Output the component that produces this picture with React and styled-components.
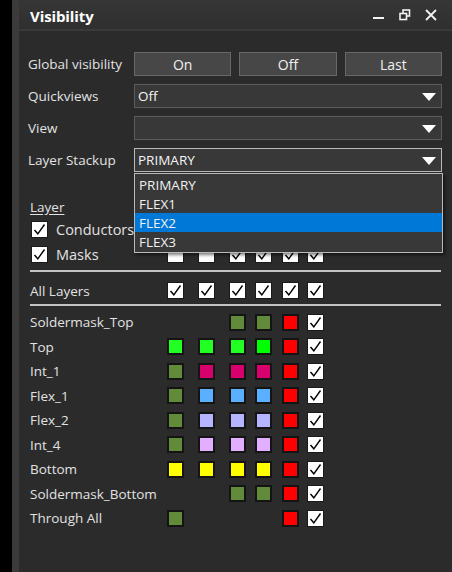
import React from 'react';
import styled, { createGlobalStyle } from 'styled-components';

const GlobalStyle = createGlobalStyle`
	html, body {
		margin: 0;
		padding: 0;
		background: #000;
	}
	#root {
		height: 572px;
	}
`;

const FONT = `"Open Sans", "Noto Sans", "DejaVu Sans", sans-serif`;

const OLIVE = '#618a3a';
const RED = '#ff0000';

const layers = [
	{ name: 'Soldermask_Top', cells: [null, null, OLIVE, OLIVE, RED, 'check'] },
	{ name: 'Top', cells: ['#22ff22', '#22ff22', '#22ff22', '#00ff00', RED, 'check'] },
	{ name: 'Int_1', cells: [OLIVE, '#d8006c', '#d8006c', '#d8006c', RED, 'check'] },
	{ name: 'Flex_1', cells: [OLIVE, '#5aafff', '#5aafff', '#5aafff', RED, 'check'] },
	{ name: 'Flex_2', cells: [OLIVE, '#b4b4ff', '#b4b4ff', '#b4b4ff', RED, 'check'] },
	{ name: 'Int_4', cells: [OLIVE, '#e2aeff', '#e2aeff', '#e2aeff', RED, 'check'] },
	{ name: 'Bottom', cells: ['#ffff00', '#ffff00', '#ffff00', '#ffff00', RED, 'check'] },
	{ name: 'Soldermask_Bottom', cells: [null, null, OLIVE, OLIVE, RED, 'check'] },
	{ name: 'Through All', cells: [OLIVE, null, null, null, RED, 'check'] },
];

const stackups = ['PRIMARY', 'FLEX1', 'FLEX2', 'FLEX3'];

const Screen = styled.div`
	display: flex;
	height: 572px;
	font-family: ${FONT};
	color: #e2e2e2;
`;

const Gutter = styled.div`
	width: 12px;
	background: #000;
`;

const Edge = styled.div`
	width: 7px;
	background: #3b3b3b;
`;

const Panel = styled.div`
	flex: 1;
	display: flex;
	flex-direction: column;
	background: #2b2b2b;
`;

const Header = styled.div`
	height: 29px;
	display: flex;
	align-items: center;
	padding: 0 15px 0 11px;
	background: linear-gradient(#363636, #2f2f2f);
	border-bottom: 2px solid #3a3a3a;
`;

const Title = styled.div`
	flex: 1;
	font-size: 15px;
	font-weight: 700;
	color: #fff;
	letter-spacing: -0.1px;
	padding-top: 2px;
`;

const HeaderIcons = styled.div`
	display: flex;
	align-items: center;
	gap: 14px;
`;

const Body = styled.div`
	position: relative;
	padding: 21px 10px 0 9px;
`;

const FormRow = styled.div`
	display: grid;
	grid-template-columns: 106px 1fr;
	align-items: center;
	height: 24px;
	margin-bottom: 8px;
	font-size: 13.5px;
`;

const Buttons = styled.div`
	display: grid;
	grid-template-columns: 1fr 1fr 1fr;
	gap: 8px;
	height: 100%;
`;

const Button = styled.div`
	display: flex;
	align-items: center;
	justify-content: center;
	background: #474747;
	border: 1px solid #686868;
	color: #f0f0f0;
	font-size: 14px;
`;

const Select = styled.div`
	position: relative;
	height: 100%;
	box-sizing: border-box;
	display: flex;
	align-items: center;
	padding-left: 3px;
	background: #383838;
	border: 1px solid ${p => (p.focused ? '#b9b9b9' : '#5c5c5c')};
	color: #f4f4f4;
	font-size: 13.5px;
`;

const Arrow = styled.div`
	position: absolute;
	right: 5px;
	top: 8px;
	width: 0;
	height: 0;
	border-left: 7px solid transparent;
	border-right: 7px solid transparent;
	border-top: 8px solid #fff;
`;

const DropList = styled.div`
	position: absolute;
	left: 115px;
	right: 9px;
	top: 142px;
	background: #383838;
	border: 1px solid #b9b9b9;
	padding: 1px 0 1px;
	z-index: 2;
	box-shadow: 2px 2px 3px rgba(0, 0, 0, 0.5);
`;

const DropItem = styled.div`
	height: 19px;
	display: flex;
	align-items: center;
	padding-left: 4px;
	font-size: 13.5px;
	color: #f0f0f0;
	background: ${p => (p.selected ? '#0078d7' : 'transparent')};
`;

const LayerSection = styled.div`
	padding: 17px 0 0 2px;
`;

const LayerHeading = styled.div`
	font-size: 13.5px;
	text-decoration: underline;
	text-underline-offset: 2px;
	height: 20px;
	display: flex;
	align-items: center;
`;

const Row = styled.div`
	display: grid;
	grid-template-columns: 137px 31px 31px 26px 27px 25px 17px;
	align-items: center;
	height: ${p => p.h || 24.5}px;
	font-size: 13.5px;
`;

const CheckLabel = styled.div`
	display: flex;
	align-items: center;
	gap: 8px;
	padding-left: 1px;
	font-size: 14.5px;
`;

const Rule = styled.div`
	height: 2px;
	background: #c4c4c4;
	margin: ${p => p.m || '7px 0 8px'};
	width: 411px;
`;

const Swatch = styled.div`
	width: 17px;
	height: 17px;
	box-sizing: border-box;
	border: 2px solid #141414;
	background: ${p => p.c};
`;

const Box = styled.div`
	width: 17px;
	height: 17px;
	box-sizing: border-box;
	border: 1px solid #1a1a1a;
	background: #fff;
	display: flex;
	align-items: center;
	justify-content: center;
`;

function Check({ checked = true }) {
	return (
		<Box>
			{checked && (
				<svg width="13" height="13" viewBox="0 0 13 13">
					<path d="M1.5 7 L4.8 10.8 L11.5 1.5" fill="none" stroke="#000" strokeWidth="1.4" />
				</svg>
			)}
		</Box>
	);
}

function Cell({ v }) {
	if (v === 'check') return <Check />;
	if (v === 'empty') return <Check checked={false} />;
	if (!v) return <div />;
	return <Swatch c={v} />;
}

function WindowIcons() {
	return (
		<HeaderIcons>
			<svg width="12" height="12" viewBox="0 0 12 12">
				<rect x="0" y="8" width="11" height="2" fill="#f2f2f2" />
			</svg>
			<svg width="12" height="12" viewBox="0 0 12 12">
				<rect x="4" y="1" width="6.5" height="6" fill="none" stroke="#f2f2f2" strokeWidth="1.6" />
				<rect x="1" y="4.5" width="6.5" height="6" fill="#2f2f2f" stroke="#f2f2f2" strokeWidth="1.6" />
			</svg>
			<svg width="12" height="12" viewBox="0 0 12 12">
				<path d="M1 1 L11 11 M11 1 L1 11" stroke="#f2f2f2" strokeWidth="1.8" />
			</svg>
		</HeaderIcons>
	);
}

const App = () => {
	return (
		<Screen>
			<GlobalStyle />
			<Gutter />
			<Edge />
			<Panel>
				<Header>
					<Title>Visibility</Title>
					<WindowIcons />
				</Header>

				<Body>
					<FormRow>
						<span>Global visibility</span>
						<Buttons>
							<Button>On</Button>
							<Button>Off</Button>
							<Button>Last</Button>
						</Buttons>
					</FormRow>
					<FormRow>
						<span>Quickviews</span>
						<Select>Off<Arrow /></Select>
					</FormRow>
					<FormRow>
						<span>View</span>
						<Select><Arrow /></Select>
					</FormRow>
					<FormRow>
						<span>Layer Stackup</span>
						<Select focused>PRIMARY<Arrow /></Select>
					</FormRow>

					<DropList>
						{stackups.map(s => (
							<DropItem key={s} selected={s === 'FLEX2'}>{s}</DropItem>
						))}
					</DropList>

					<LayerSection>
						<LayerHeading>Layer</LayerHeading>
						<Row h={25}>
							<CheckLabel><Check />Conductors</CheckLabel>
							<Cell v="check" /><Cell v="check" /><Cell v="check" />
							<Cell v="check" /><Cell v="check" /><Cell v="check" />
						</Row>
						<Row h={25}>
							<CheckLabel><Check />Masks</CheckLabel>
							<Cell v="empty" /><Cell v="empty" /><Cell v="check" />
							<Cell v="check" /><Cell v="check" /><Cell v="check" />
						</Row>
						<Rule m="3px 0 6px" />
						<Row h={25}>
							<span>All Layers</span>
							<Cell v="check" /><Cell v="check" /><Cell v="check" />
							<Cell v="check" /><Cell v="check" /><Cell v="check" />
						</Row>
						<Rule m="1px 0 4px" />
						{layers.map(l => (
							<Row key={l.name}>
								<span>{l.name}</span>
								{l.cells.map((c, i) => <Cell key={i} v={c} />)}
							</Row>
						))}
					</LayerSection>
				</Body>
			</Panel>
		</Screen>
	);
};

export default App;
